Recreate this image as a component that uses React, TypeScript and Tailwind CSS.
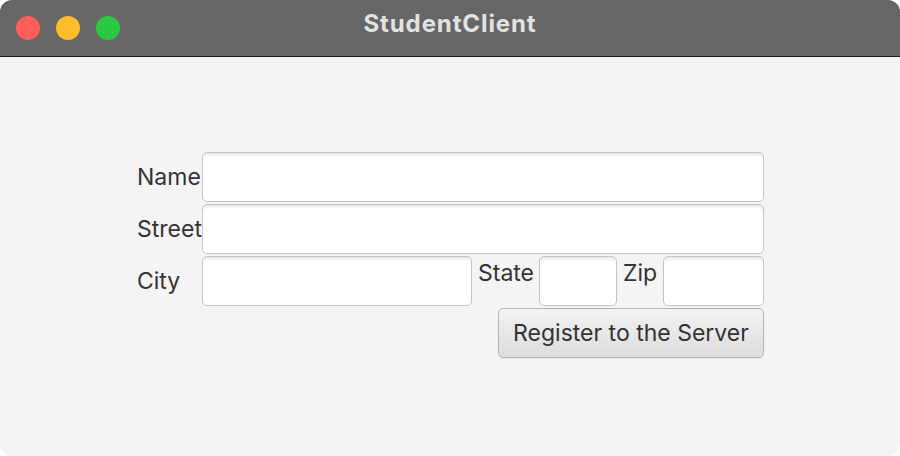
import React from "react";

const field =
  "h-[50px] bg-white border-[1.5px] border-[#c4c4c4] rounded-[5px] shadow-[inset_0_4px_3px_-2px_rgba(0,0,0,0.10)]";

export default function App() {
  return (
    <div className="w-[900px] h-[456px] bg-white" style={{ fontFamily: "Inter, 'Noto Sans', sans-serif" }}>
      <div className="w-[900px] h-[456px] rounded-[12px] overflow-hidden flex flex-col bg-[#f4f4f4]">
        <div className="h-[57px] bg-[#666666] border-b border-[#1a1a1a] relative flex items-center justify-center shrink-0">
          <div className="absolute left-[16px] top-[16px] flex gap-[16px]">
            <div className="w-[24px] h-[24px] rounded-full bg-[#ff5f57]" />
            <div className="w-[24px] h-[24px] rounded-full bg-[#febc2e]" />
            <div className="w-[24px] h-[24px] rounded-full bg-[#28c840]" />
          </div>
          <div className="text-[24px] font-bold text-[#e2e2e2] -mt-[8px] tracking-[0.9px]">StudentClient</div>
        </div>
        <div className="flex flex-col gap-[2px] pl-[137px] pt-[95px] text-[23px] text-[#333333]">
          <div className="flex items-center">
            <div className="w-[65px] whitespace-nowrap mt-[1px]">Name</div>
            <div className={`${field} w-[562px]`} />
          </div>
          <div className="flex items-center">
            <div className="w-[65px] whitespace-nowrap mt-[1px]">Street</div>
            <div className={`${field} w-[562px]`} />
          </div>
          <div className="flex items-center">
            <div className="w-[65px] mt-[1px]">City</div>
            <div className={`${field} w-[270px]`} />
            <div className="w-[61px] ml-[6px] self-start">State</div>
            <div className={`${field} w-[78px]`} />
            <div className="w-[40px] ml-[6px] self-start">Zip</div>
            <div className={`${field} w-[101px]`} />
          </div>
          <div className="flex">
            <button className="ml-[361px] w-[266px] h-[50px] rounded-[5px] border-[1.5px] border-[#b4b4b4] bg-gradient-to-b from-[#f3f3f3] to-[#dddddd] text-[23px] text-[#333333] shadow-[0_1px_1px_rgba(0,0,0,0.06)]">
              Register to the Server
            </button>
          </div>
        </div>
      </div>
    </div>
  );
}
